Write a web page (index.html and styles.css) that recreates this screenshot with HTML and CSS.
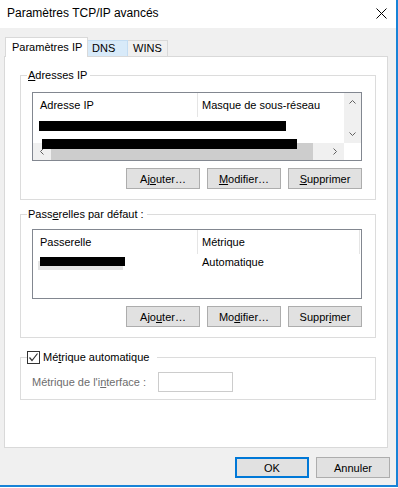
FILE: index.html
```html
<!DOCTYPE html>
<html lang="fr">
<head>
  <meta charset="UTF-8" />
  <meta name="viewport" content="width=device-width, initial-scale=1.0" />
  <title>Paramètres TCP/IP avancés</title>
  <link rel="stylesheet" href="styles.css">
</head>

<body>
  <div class="window">
    <div class="titlebar">
      <span class="title">Paramètres TCP/IP avancés</span>
      <svg class="close" width="11" height="11" viewBox="0 0 11 11">
        <path d="M0.5 0.5 L10.5 10.5 M10.5 0.5 L0.5 10.5" stroke="#000" stroke-width="1" fill="none" />
      </svg>
    </div>

    <div class="dialog">
      <div class="tabs">
        <div class="tab tab-active">Paramètres IP</div>
        <div class="tab tab-hot">DNS</div>
        <div class="tab tab-wins">WINS</div>
      </div>

      <div class="panel">
        <!-- Adresses IP -->
        <fieldset class="group group-ip">
          <legend><u>A</u>dresses IP</legend>
          <div class="listview lv-scroll">
            <div class="lv-body">
              <div class="lv-header">
                <div class="lv-col col-1">Adresse IP</div>
                <div class="lv-col col-2">Masque de sous-réseau</div>
              </div>
              <div class="lv-row"><span class="redact redact-a"></span></div>
              <div class="lv-row"><span class="redact redact-b"></span></div>
            </div>
            <div class="vscroll">
              <div class="sb-btn">
                <svg width="7" height="5" viewBox="0 0 7 5"><polyline points="0.5,4.5 3.5,1.5 6.5,4.5" stroke="#606060" fill="none" /></svg>
              </div>
              <div class="sb-btn">
                <svg width="7" height="5" viewBox="0 0 7 5"><polyline points="0.5,0.5 3.5,3.5 6.5,0.5" stroke="#606060" fill="none" /></svg>
              </div>
            </div>
            <div class="hscroll">
              <div class="sb-btn">
                <svg width="5" height="7" viewBox="0 0 5 7"><polyline points="4.5,0.5 1.5,3.5 4.5,6.5" stroke="#606060" fill="none" /></svg>
              </div>
              <div class="thumb"></div>
              <div class="track"></div>
              <div class="sb-btn">
                <svg width="5" height="7" viewBox="0 0 5 7"><polyline points="0.5,0.5 3.5,3.5 0.5,6.5" stroke="#606060" fill="none" /></svg>
              </div>
            </div>
            <div class="corner"></div>
          </div>
          <div class="buttons">
            <button class="btn">Aj<u>o</u>uter…</button>
            <button class="btn"><u>M</u>odifier…</button>
            <button class="btn"><u>S</u>upprimer</button>
          </div>
        </fieldset>

        <!-- Passerelles -->
        <fieldset class="group group-gw">
          <legend>Pass<u>e</u>relles par défaut :</legend>
          <div class="listview lv-plain">
            <div class="lv-header">
              <div class="lv-col col-1">Passerelle</div>
              <div class="lv-col col-2 col-last">Métrique</div>
            </div>
            <div class="lv-row">
              <div class="lv-cell col-1"><span class="redact redact-c"></span></div>
              <div class="lv-cell col-2">Automatique</div>
            </div>
          </div>
          <div class="buttons">
            <button class="btn">Ajo<u>u</u>ter…</button>
            <button class="btn">Mo<u>d</u>ifier…</button>
            <button class="btn">Suppr<u>i</u>mer</button>
          </div>
        </fieldset>

        <!-- Métrique -->
        <fieldset class="group group-metric">
          <legend class="legend-check">
            <span class="checkbox">
              <svg width="11" height="11" viewBox="0 0 11 11"><polyline points="1.5,5.5 4,8.5 9.5,1.5" stroke="#333" stroke-width="1.2" fill="none" /></svg>
            </span>
            <span class="check-label">Mé<u>t</u>rique automatique</span>
          </legend>
          <div class="field-row">
            <span class="field-label">Métrique de l'i<u>n</u>terface :</span>
            <span class="textbox"></span>
          </div>
        </fieldset>
      </div>

      <div class="footer">
        <button class="btn btn-default">OK</button>
        <button class="btn">Annuler</button>
      </div>
    </div>
  </div>
</body>
</html>
```

FILE: styles.css
```css
* {
  box-sizing: border-box;
}

html,
body {
  margin: 0;
  background-color: #fff;
}

body {
  font-family: "Liberation Sans", Arial, sans-serif;
  font-size: 11px;
  color: #000;
}

u {
  text-underline-offset: 1px;
}

.window {
  width: 398px;
  height: 487px;
  display: flex;
  flex-direction: column;
  border-right: 2px solid #1883d7;
  border-bottom: 2px solid #1883d7;
}

/* barre de titre */
.titlebar {
  height: 28px;
  display: flex;
  align-items: center;
  justify-content: space-between;
  padding: 0 9px 2px 7px;
  background-color: #fff;
}

.title {
  font-size: 12px;
}

.dialog {
  flex: 1;
  background-color: #f0f0f0;
}

/* onglets */
.tabs {
  display: flex;
  align-items: flex-end;
  margin-top: 9px;
  padding-left: 5px;
}

.tab {
  height: 16px;
  line-height: 15px;
  border-top: 1px solid #d9d9d9;
  border-right: 1px solid #d9d9d9;
  width: 40px;
}

.tab-active {
  position: relative;
  z-index: 1;
  width: 83px;
  height: 20px;
  line-height: 19px;
  margin-bottom: -1px;
  padding-left: 6px;
  border-left: 1px solid #d9d9d9;
  background-color: #fff;
}

.tab-hot {
  padding-left: 4px;
  background-color: #d8eaf9;
  border-color: #c3dcf2;
}

.tab-wins {
  padding-left: 5px;
}

.panel {
  width: 384px;
  height: 392px;
  margin-left: 4px;
  padding: 12px 11px 0 15px;
  background-color: #fff;
  border: 1px solid #d9d9d9;
}

/* cadres */
.group {
  margin: 0;
  min-inline-size: 0;
  width: 356px;
  border: 1px solid #dcdcdc;
  padding: 10px 13px 10px 11px;
}

.group legend {
  margin-left: -5px;
  padding: 0 3px 0 1px;
  line-height: 13px;
  height: 13px;
}

.group-gw {
  margin-top: 8px;
  padding-top: 8px;
}

.group-metric {
  margin-top: 13px;
  padding-top: 8px;
  padding-bottom: 7px;
}

/* listes */
.listview {
  width: 330px;
  border: 1px solid #828790;
  background-color: #fff;
}

.lv-scroll {
  height: 69px;
  display: grid;
  grid-template-columns: 311px 17px;
  grid-template-rows: 50px 17px;
}

.lv-plain {
  height: 70px;
}

.lv-body {
  z-index: 1;
}

.lv-header {
  display: flex;
  height: 24px;
  line-height: 24px;
}

.lv-col,
.lv-cell {
  white-space: nowrap;
}

.col-1 {
  width: 165px;
  padding-left: 7px;
  flex-shrink: 0;
}

.lv-header .col-1 {
  border-right: 1px solid #e5e5e5;
}

.col-2 {
  flex: 1;
  padding-left: 4px;
}

.col-last {
  margin-right: 1px;
  border-right: 1px solid #e5e5e5;
}

.lv-row {
  display: flex;
  height: 17px;
  line-height: 17px;
}

.redact {
  display: block;
  background-color: #000;
}

.redact-a {
  margin: 4px 0 0 6px;
  width: 247px;
  height: 10px;
}

.redact-b {
  margin: 5px 0 0 9px;
  width: 255px;
  height: 10px;
}

.lv-cell.col-1 {
  padding-left: 0;
}

.redact-c {
  margin: 3px 0 0 7px;
  width: 85px;
  height: 9px;
  box-shadow: -2px 4px 0 #e4e4e4;
}

/* barres de défilement */
.vscroll {
  display: flex;
  flex-direction: column;
  justify-content: space-between;
  background-color: #f0f0f0;
}

.hscroll {
  display: flex;
  background-color: #f0f0f0;
}

.sb-btn {
  width: 17px;
  height: 17px;
  display: flex;
  align-items: center;
  justify-content: center;
  flex-shrink: 0;
}

.thumb {
  width: 262px;
  margin-left: 1px;
  background-color: #cdcdcd;
}

.track {
  flex: 1;
}

.corner {
  background-color: #fff;
}

/* boutons */
.buttons {
  display: flex;
  justify-content: flex-end;
  gap: 7px;
  margin-top: 7px;
  width: 330px;
}

.btn {
  width: 74px;
  height: 21px;
  padding: 0;
  font-family: inherit;
  font-size: 11px;
  color: #000;
  background-color: #e1e1e1;
  border: 1px solid #adadad;
}

.btn-default {
  border: 2px solid #0078d7;
}

/* case à cocher */
.group .legend-check {
  display: flex;
  align-items: center;
  padding: 0 8px 0 0;
}

.checkbox {
  width: 13px;
  height: 13px;
  border: 1px solid #333;
  background-color: #fff;
  display: flex;
  align-items: center;
  justify-content: center;
}

.check-label {
  margin-left: 3px;
}

.field-row {
  display: flex;
  align-items: center;
}

.field-label {
  width: 126px;
  color: #6d6d6d;
}

.textbox {
  width: 75px;
  height: 20px;
  border: 1px solid #cccccc;
  background-color: #fff;
}

.footer {
  display: flex;
  justify-content: flex-end;
  gap: 7px;
  margin-top: 9px;
  padding-right: 6px;
}
```
